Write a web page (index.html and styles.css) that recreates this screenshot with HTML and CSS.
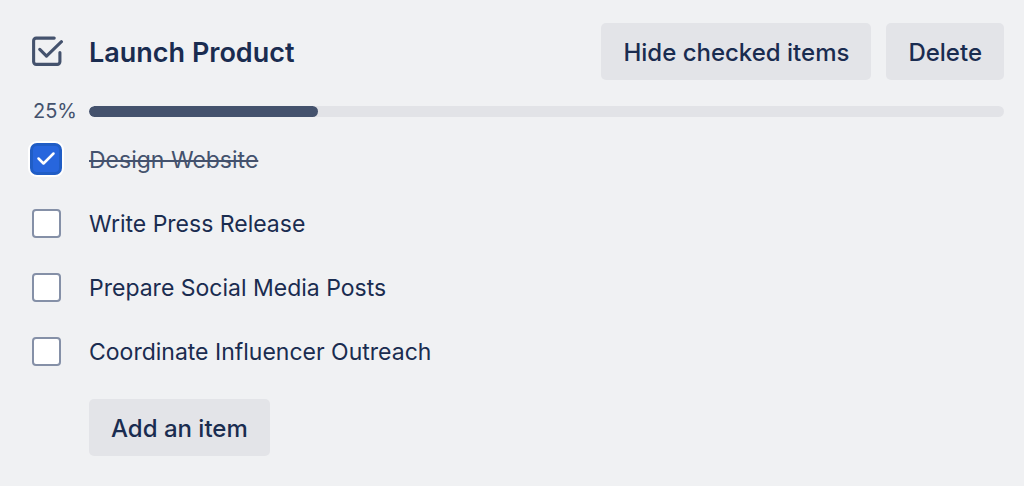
FILE: index.html
```
<!DOCTYPE html>
<html lang="en">

<head>
    <meta charset="UTF-8">
    <meta name="viewport" content="width=device-width, initial-scale=1.0">
    <title>Launch Product</title>
    <link rel="stylesheet" href="styles.css">
</head>

<body>
    <section class="checklist">
        <header class="checklist-header">
            <svg class="checklist-icon" viewBox="0 0 32 32" aria-hidden="true">
                <path d="M23.500 3H6A2.500 2.500 0 0 0 3.500 5.500V26A2.500 2.500 0 0 0 6 28.500H26.500A2.500 2.500 0 0 0 29 26V17" />
                <path d="M9.500 14L16 20.500L30.500 6.500" />
            </svg>
            <h1 class="checklist-title">Launch Product</h1>
            <div class="checklist-actions">
                <button type="button" class="btn">Hide checked items</button>
                <button type="button" class="btn">Delete</button>
            </div>
        </header>

        <div class="progress">
            <span class="progress-label" id="progress-label">25%</span>
            <div class="progress-track" role="progressbar" aria-labelledby="progress-label" aria-valuenow="25" aria-valuemin="0" aria-valuemax="100">
                <div class="progress-fill" style="width: 25%"></div>
            </div>
        </div>

        <ul class="items">
            <li class="item">
                <span class="check">
                    <input type="checkbox" id="item-1" checked>
                    <svg class="check-mark" viewBox="0 0 32 32" aria-hidden="true">
                        <path d="M8.500 15.500L13.500 20.500L23.500 10.500" />
                    </svg>
                </span>
                <label for="item-1">Design Website</label>
            </li>
            <li class="item">
                <span class="check"><input type="checkbox" id="item-2"></span>
                <label for="item-2">Write Press Release</label>
            </li>
            <li class="item">
                <span class="check"><input type="checkbox" id="item-3"></span>
                <label for="item-3">Prepare Social Media Posts</label>
            </li>
            <li class="item">
                <span class="check"><input type="checkbox" id="item-4"></span>
                <label for="item-4">Coordinate Influencer Outreach</label>
            </li>
        </ul>

        <div class="checklist-footer">
            <button type="button" class="btn">Add an item</button>
        </div>
    </section>
</body>

</html>
```

FILE: styles.css
```
* {
    box-sizing: border-box;
}

body {
    margin: 0;
    background: #f0f1f3;
    color: #1a2c50;
    font-family: Inter, "Liberation Sans", sans-serif;
    font-size: 24px;
    line-height: 32px;
}

.checklist {
    padding: 23px 20px 30px 30px;
}

.checklist-header {
    display: grid;
    grid-template-columns: 59px 1fr auto;
    align-items: center;
}

.checklist-icon {
    width: 33px;
    height: 33px;
    fill: none;
    stroke: #44526d;
    stroke-width: 3;
    stroke-linecap: round;
    stroke-linejoin: round;
}

.checklist-title {
    margin: 0;
    padding-top: 2px;
    font-size: 27px;
    font-weight: 600;
}

.checklist-actions {
    display: flex;
    gap: 15px;
}

.btn {
    height: 57px;
    padding: 2px 22px 0;
    border: none;
    border-radius: 5px;
    background: #e3e4e8;
    color: inherit;
    font: inherit;
    font-weight: 500;
    cursor: pointer;
}

.btn:hover {
    background: #d8dade;
}

.progress {
    display: grid;
    grid-template-columns: 59px 1fr;
    align-items: center;
    margin-top: 15px;
}

.progress-label {
    padding-left: 3px;
    color: #44526d;
    font-size: 20px;
}

.progress-track {
    height: 11px;
    border-radius: 6px;
    background: #e2e3e7;
    overflow: hidden;
}

.progress-fill {
    height: 100%;
    border-radius: 6px;
    background: #44526d;
}

.items {
    margin: 0;
    padding: 0;
    list-style: none;
}

.item {
    display: grid;
    grid-template-columns: 59px 1fr;
    align-items: center;
    height: 64px;
}

.check {
    position: relative;
    display: flex;
    align-items: center;
    justify-content: center;
    width: 32px;
    height: 32px;
}

.check input {
    appearance: none;
    width: 29px;
    height: 29px;
    margin: 0;
    border: 2px solid #8590a7;
    border-radius: 4px;
    background: #fff;
    cursor: pointer;
}

.check input:checked {
    width: 32px;
    height: 32px;
    border: 3px solid #205dc5;
    border-radius: 7px;
    background: #2766dd;
    box-shadow: 0 0 0 2px #fff;
}

.check-mark {
    position: absolute;
    inset: 0;
    fill: none;
    stroke: #fff;
    stroke-width: 2.5;
    stroke-linecap: round;
    stroke-linejoin: round;
    pointer-events: none;
}

.check input:not(:checked) + .check-mark {
    display: none;
}

.item label {
    justify-self: start;
    padding-top: 2px;
    font-size: 23px;
}

.item:has(input:checked) label {
    color: #44526d;
    text-decoration: line-through;
}

.checklist-footer {
    padding: 16px 0 0 59px;
}
```
